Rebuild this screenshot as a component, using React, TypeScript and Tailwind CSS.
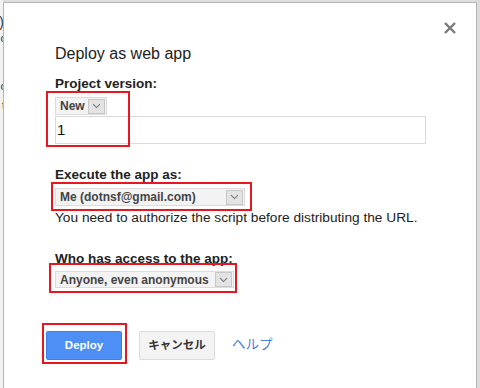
import React from "react";

function Chevron() {
  return (
    <svg width="9" height="6" viewBox="0 0 9 6" className="block">
      <path d="M1 1.2 L4.5 4.6 L8 1.2" fill="none" stroke="#777" strokeWidth="1.1" />
    </svg>
  );
}

function Select({ label, width, height }: { label: string; width: string; height: string }) {
  return (
    <div
      className={`flex items-center border border-[#dcdcdc] bg-[#f3f3f3] pl-[4px] pr-[1px] ${width} ${height}`}
    >
      <span className="flex-1 text-[12px] leading-[16px] font-bold text-[#444] whitespace-nowrap">
        {label}
      </span>
      <span className="flex items-center justify-center w-[17px] h-[15px] bg-[#e3e3e3] border border-[#c8c8c8] ml-[3px]">
        <Chevron />
      </span>
    </div>
  );
}

function RedBox({ className }: { className: string }) {
  return <span className={`absolute border-2 border-[#e8161e] pointer-events-none ${className}`} />;
}

export default function App() {
  return (
    <div
      className="w-[480px] h-[388px] overflow-hidden bg-[#dedede] flex"
      style={{ fontFamily: '"Liberation Sans", Arial, "Noto Sans CJK JP", sans-serif' }}
    >
      <div className="w-[3px] shrink-0 bg-[#f2f2f2] overflow-hidden relative">
        <div className="absolute right-[-1px] top-[14px] text-[14px] leading-[16px] text-[#333]">)</div>
        <div className="absolute right-[-3px] top-[32px] text-[11px] leading-[12px] text-[#333]">c</div>
        <div className="absolute right-[-3px] top-[80px] text-[11px] leading-[12px] text-[#333]">c</div>
        <div className="absolute right-[-2px] top-[99px] text-[11px] leading-[12px] text-[#333]">t</div>
      </div>
      <div className="relative flex-1 mt-[2px] bg-white border-l border-t border-r border-[#b5b5b5] pl-[51px] pt-[41px]">
        <button className="absolute right-[19px] top-[18px] w-[14px] h-[14px]">
          <svg width="14" height="14" viewBox="0 0 14 14">
            <path d="M2 2 L12 12 M12 2 L2 12" stroke="#7a7a7a" strokeWidth="2.4" />
          </svg>
        </button>

        <h1 className="text-[16px] leading-[20px] text-[#222] font-normal">Deploy as web app</h1>

        <div className="mt-[12px] text-[13.5px] leading-[16px] font-bold text-[#222]">Project version:</div>
        <div className="relative mt-[5px] w-[371px]">
          <RedBox className="left-[-9px] top-[-6px] w-[84px] h-[56px]" />
          <div className="w-fit">
            <div className="flex items-center h-[18px] border border-[#dcdcdc] bg-[#f3f3f3] pl-[4px] pr-[1px]">
              <span className="text-[12px] leading-[16px] font-bold text-[#444]">New</span>
              <span className="flex items-center justify-center w-[17px] h-[15px] bg-[#e3e3e3] border border-[#c8c8c8] ml-[3px]">
                <Chevron />
              </span>
            </div>
          </div>
          <div className="mt-[1px] h-[28px] border border-[#d9d9d9] flex items-center pl-[1px] text-[15px] text-[#111]">
            1
          </div>
        </div>

        <div className="mt-[23px] text-[13.5px] leading-[16px] font-bold text-[#222]">Execute the app as:</div>
        <div className="relative mt-[5px] w-fit">
          <RedBox className="left-[-4px] top-[-6px] right-[-7px] bottom-[-5px]" />
          <Select label="Me (dotnsf@gmail.com)" width="w-[190px]" height="h-[18px]" />
        </div>
        <div className="mt-[4px] text-[13.7px] leading-[16px] text-[#222]">
          You need to authorize the script before distributing the URL.
        </div>

        <div className="mt-[25px] text-[13.5px] leading-[16px] font-bold text-[#222]">Who has access to the app:</div>
        <div className="relative mt-[4px] w-fit">
          <RedBox className="left-[-6px] top-[-8px] right-[-3px] bottom-[-5px]" />
          <Select label="Anyone, even anonymous" width="w-[179px]" height="h-[17px]" />
        </div>

        <div className="mt-[43px] flex items-center ml-[-9px]">
          <div className="relative">
            <RedBox className="left-[-4px] top-[-8px] right-[-5px] bottom-[-4px]" />
            <button className="w-[76px] h-[29px] rounded-[2px] bg-[#4d8ff5] border border-[#3d7fe8] text-white text-[11.5px] font-bold">
              Deploy
            </button>
          </div>
          <button className="ml-[17px] w-[76px] h-[29px] rounded-[2px] bg-[#f3f3f3] border border-[#dcdcdc] text-[#333] text-[11.5px] font-bold">
            キャンセル
          </button>
          <span className="ml-[17px] text-[13.5px] text-[#4b7fde]">ヘルプ</span>
        </div>
      </div>
      <div className="w-[3px] shrink-0 bg-[#dcdcdc]" />
    </div>
  );
}
